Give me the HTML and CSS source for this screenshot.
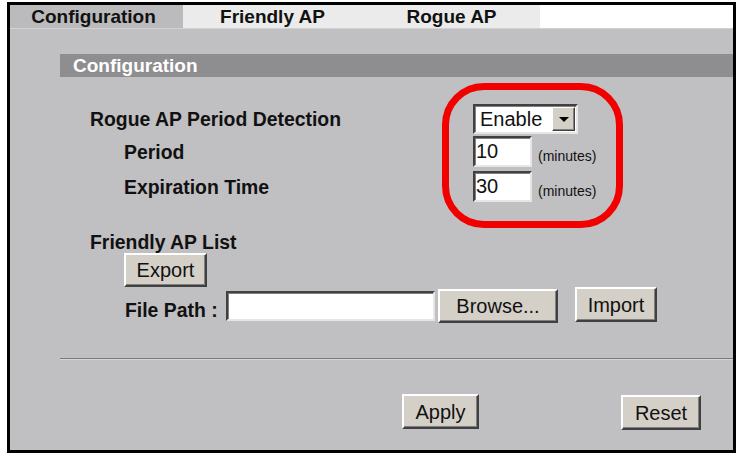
FILE: index.html
```html
<!DOCTYPE html>
<html>
<head>
<meta charset="utf-8">
<link rel="stylesheet" href="styles.css">
</head>
<body>
<div class="frame">
  <div class="tabs">
    <div class="tab tab-active">Configuration</div>
    <div class="tab tab-2">Friendly AP</div>
    <div class="tab tab-3">Rogue AP</div>
  </div>
  <div class="content">
    <div class="section-title">Configuration</div>
    <div class="settings">
      <div class="label">Rogue AP Period Detection</div>
      <div class="ctrl">
        <div class="select">
          <span class="select-value">Enable</span>
          <span class="select-btn"><span class="tri"></span></span>
        </div>
      </div>
      <div class="label indent">Period</div>
      <div class="ctrl"><div class="input small">10</div><span class="unit">(minutes)</span></div>
      <div class="label indent">Expiration Time</div>
      <div class="ctrl"><div class="input small">30</div><span class="unit">(minutes)</span></div>
    </div>
    <div class="friendly">
      <div class="label">Friendly AP List</div>
      <button class="btn btn-export">Export</button>
      <div class="file-row">
        <div class="label file-label">File Path :</div>
        <div class="input file-input"></div>
        <button class="btn btn-browse">Browse...</button>
        <button class="btn btn-import">Import</button>
      </div>
    </div>
    <div class="separator"></div>
    <div class="actions">
      <button class="btn btn-apply">Apply</button>
      <button class="btn btn-reset">Reset</button>
    </div>
  </div>
  <div class="highlight"></div>
</div>
</body>
</html>
```

FILE: styles.css
```css
* { box-sizing: border-box; }
html, body { margin: 0; padding: 0; background: #ffffff; }
body { font-family: "Liberation Sans", Arial, sans-serif; color: #111; }

.frame {
  position: relative;
  margin: 2px 0 0 7px;
  width: 729px;
  height: 451px;
  border: 3px solid #000;
  background: #c0bfc1;
  display: flex;
  flex-direction: column;
}

.tabs {
  display: flex;
  height: 24px;
  background: #ffffff;
  border-bottom: 1px solid #d2d1d3;
}
.tab {
  height: 23px;
  line-height: 23px;
  font-weight: bold;
  font-size: 19px;
  text-align: center;
  background: #ebebeb;
  color: #111;
}
.tab-active { width: 173px; background: #bbbabc; padding-right: 6px; }
.tab-2 { width: 183px; padding-right: 4px; }
.tab-3 { width: 174px; padding-right: 3px; }

.content {
  padding-left: 50px;
  flex: 1;
}

.section-title {
  margin-top: 25px;
  height: 23px;
  line-height: 23px;
  background: #8e8d8f;
  color: #fff;
  font-weight: bold;
  font-size: 19px;
  padding-left: 13px;
}

.label {
  font-weight: bold;
  font-size: 19.4px;
  line-height: 22px;
  color: #111;
  white-space: nowrap;
}
.indent { padding-left: 34px; }

.settings {
  margin-top: 26px;
  padding-left: 30px;
  display: grid;
  grid-template-columns: 383px auto;
  grid-template-rows: 31px 35px 35px;
  align-items: center;
}
.ctrl { display: flex; align-items: center; }

.select {
  width: 105px;
  height: 30px;
  display: flex;
  align-items: center;
  background: #fff;
  border-style: solid;
  border-width: 2px;
  border-color: #404040 #e6e6e6 #e6e6e6 #404040;
  box-shadow: inset 1px 1px 0 #808080;
}
.select-value {
  flex: 1;
  font-size: 20px;
  padding-left: 5px;
  line-height: 24px;
  color: #111;
}
.select-btn {
  width: 23px;
  height: 24px;
  margin-right: 1px;
  background: #d4d0c8;
  border-style: solid;
  border-width: 1px;
  border-color: #fff #404040 #404040 #fff;
  box-shadow: inset -1px -1px 0 #808080;
  display: flex;
  align-items: center;
  justify-content: center;
}
.tri {
  width: 0;
  height: 0;
  border-left: 5px solid transparent;
  border-right: 5px solid transparent;
  border-top: 5px solid #000;
  margin-top: 1px;
}

.input {
  background: #fff;
  border-style: solid;
  border-width: 2px;
  border-color: #404040 #e6e6e6 #e6e6e6 #404040;
  box-shadow: inset 1px 1px 0 #808080;
  font-size: 20px;
  line-height: 26px;
  padding-left: 1px;
  color: #111;
}
.small { width: 59px; height: 31px; }
.unit {
  font-size: 14px;
  margin-left: 6px;
  margin-top: 8px;
  color: #111;
}

.friendly {
  margin-top: 27px;
  padding-left: 30px;
}
.btn {
  display: block;
  font-family: "Liberation Sans", Arial, sans-serif;
  font-size: 20px;
  color: #111;
  background: #d4d0c8;
  border-style: solid;
  border-width: 2px;
  border-color: #ffffff #404040 #404040 #ffffff;
  box-shadow: inset -1px -1px 0 #808080;
  padding: 0;
  text-align: center;
  line-height: 28px;
}
.btn-export { margin-left: 34px; width: 83px; height: 34px; }

.file-row {
  display: flex;
  align-items: flex-start;
}
.file-label { width: 101px; margin-left: 35px; margin-top: 12px; }
.file-input { width: 209px; height: 30px; margin-top: 4px; }
.btn-browse { width: 120px; height: 34px; margin-left: 3px; margin-top: 2px; }
.btn-import { width: 82px; height: 35px; margin-left: 17px; }

.separator {
  margin-top: 35px;
  height: 2px;
  border-top: 1px solid #7a797b;
  border-bottom: 1px solid #d6d5d7;
}

.actions {
  display: flex;
  align-items: flex-start;
  margin-top: 34px;
}
.btn-apply { margin-left: 342px; width: 77px; height: 35px; }
.btn-reset { margin-left: 142px; width: 80px; height: 35px; margin-top: 1px; }

.highlight {
  position: absolute;
  left: 432px;
  top: 78px;
  width: 181px;
  height: 145px;
  border: 7px solid #f20000;
  border-radius: 42px;
}
```
